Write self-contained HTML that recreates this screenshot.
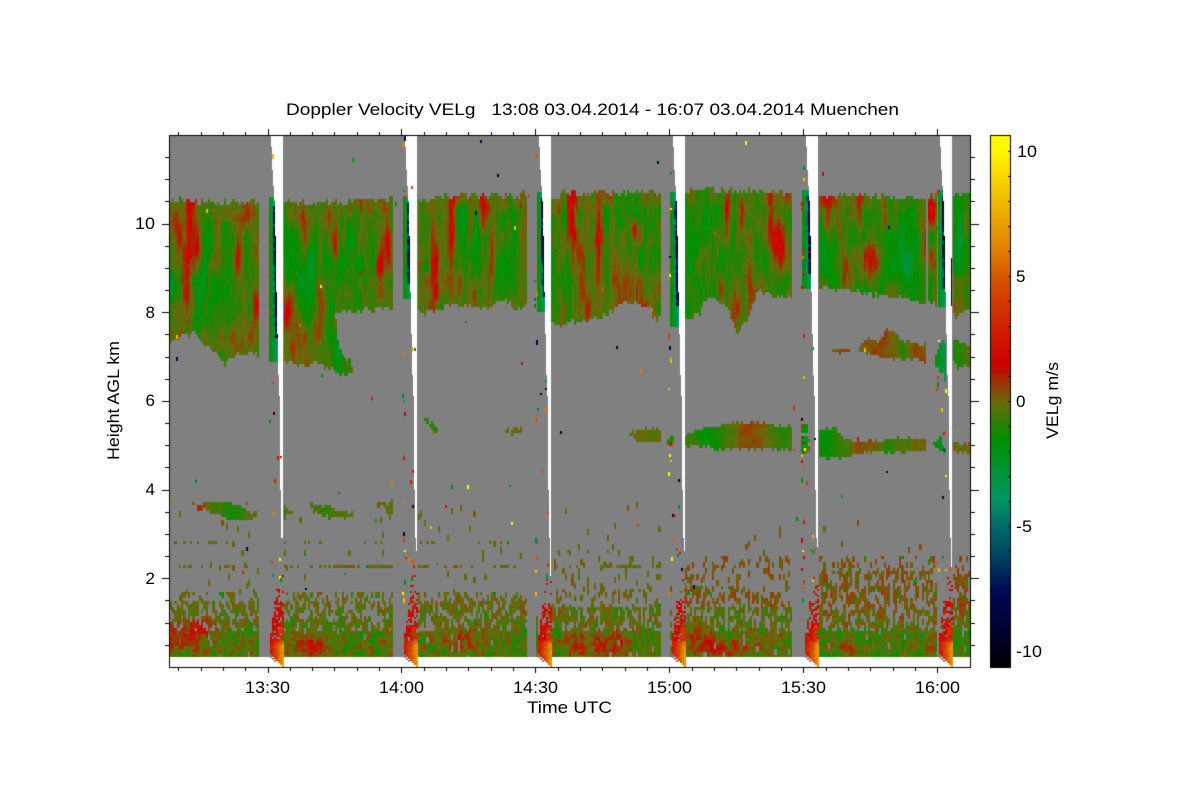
<!DOCTYPE html>
<html><head><meta charset="utf-8"><title>Doppler Velocity</title>
<style>
html,body{margin:0;padding:0;background:#fff;width:1200px;height:800px;overflow:hidden}
canvas,svg{position:absolute;left:0;top:0}
text{font-family:"Liberation Sans",sans-serif;font-size:17px;fill:#000}
</style></head><body>
<canvas id="c" width="1200" height="800"></canvas>
<svg width="1200" height="800" viewBox="0 0 1200 800">
<text x="286" y="115" textLength="613" lengthAdjust="spacingAndGlyphs" xml:space="preserve">Doppler Velocity VELg   13:08 03.04.2014 - 16:07 03.04.2014 Muenchen</text>
<g text-anchor="end">
<text x="155" y="229" textLength="20" lengthAdjust="spacingAndGlyphs">10</text>
<text x="155" y="318">8</text>
<text x="155" y="406">6</text>
<text x="155" y="495">4</text>
<text x="155" y="584">2</text>
</g>
<g text-anchor="middle">
<text x="267.5" y="693" textLength="45" lengthAdjust="spacingAndGlyphs">13:30</text>
<text x="401.5" y="693" textLength="45" lengthAdjust="spacingAndGlyphs">14:00</text>
<text x="535.5" y="693" textLength="45" lengthAdjust="spacingAndGlyphs">14:30</text>
<text x="669.5" y="693" textLength="45" lengthAdjust="spacingAndGlyphs">15:00</text>
<text x="803.5" y="693" textLength="45" lengthAdjust="spacingAndGlyphs">15:30</text>
<text x="937.5" y="693" textLength="45" lengthAdjust="spacingAndGlyphs">16:00</text>
</g>
<text x="527" y="713" textLength="85" lengthAdjust="spacingAndGlyphs">Time UTC</text>
<text transform="translate(119 460) rotate(-90)" textLength="119" lengthAdjust="spacingAndGlyphs">Height AGL km</text>
<text transform="translate(1058 439) rotate(-90)" textLength="77" lengthAdjust="spacingAndGlyphs">VELg m/s</text>
<text x="1017" y="157" textLength="20" lengthAdjust="spacingAndGlyphs">10</text>
<text x="1016" y="282">5</text>
<text x="1016" y="407">0</text>
<text x="1016" y="532" textLength="16" lengthAdjust="spacingAndGlyphs">-5</text>
<text x="1016" y="657" textLength="26" lengthAdjust="spacingAndGlyphs">-10</text>
</svg>
<script>
var g=document.getElementById('c').getContext('2d');
function h(a,b){var t=Math.sin(a*127.1+b*311.7)*43758.5453;return t-Math.floor(t);}
function vn(x,y){var i=Math.floor(x),j=Math.floor(y),f=x-i,e=y-j;f=f*f*(3-2*f);e=e*e*(3-2*e);
 var a=h(i,j),b=h(i+1,j),c=h(i,j+1),d=h(i+1,j+1);return (a*(1-f)+b*f)*(1-e)+(c*(1-f)+d*f)*e;}
var P=[[-10.7,0,0,0],[-9,0,0,50],[-7.5,0,10,85],[-6,0,75,100],[-5,0,105,105],[-3.9,0,150,100],[-1.5,0,145,0],[0,105,105,10],[1.5,205,0,0],[3.5,210,45,0],[5,215,85,0],[6,225,125,0],[8,240,185,0],[10,255,245,0],[10.7,255,255,0]];
function col(v){if(v<=-10.7)return 'rgb(0,0,0)';if(v>=10.7)return 'rgb(255,255,0)';
 for(var k=0;k<P.length-1;k++){if(v<=P[k+1][0]){var t=(v-P[k][0])/(P[k+1][0]-P[k][0]);
 return 'rgb('+Math.round(P[k][1]+t*(P[k+1][1]-P[k][1]))+','+Math.round(P[k][2]+t*(P[k+1][2]-P[k][2]))+','+Math.round(P[k][3]+t*(P[k+1][3]-P[k][3]))+')';}}}
function ip(a,x){if(x<=a[0][0])return a[0][1];for(var k=0;k<a.length-1;k++){if(x<=a[k+1][0]){var t=(x-a[k][0])/(a[k+1][0]-a[k][0]||1);return a[k][1]+t*(a[k+1][1]-a[k][1]);}}return a[a.length-1][1];}
var CIR=[
{x:[170,259],t:[[170,201],[258,203]],b:[[170,342],[193,333],[203,342],[213,352],[225,363],[238,353],[258,355]]},
{x:[283,392],t:[[283,200],[320,205],[340,203],[392,198]],b:[[283,362],[300,365],[318,362],[325,368],[335,370],[335.5,312],[392,308]]},
{x:[335,352],t:[[335,310],[337,330],[340,350],[347,358],[352,366]],b:[[335,370],[345,375],[352,370]]},
{x:[417,526],t:[[417,202],[440,197],[526,195]],b:[[417,314],[436,310],[445,306],[470,304],[480,307],[490,306],[500,298],[505,300],[515,306],[526,306]]},
{x:[551,660],t:[[551,197],[565,194],[660,194]],b:[[551,318],[557,325],[575,322],[600,317],[612,310],[622,304],[635,302],[650,306],[653,320],[660,318]]},
{x:[685,792],t:[[685,196],[690,190],[780,193],[792,195]],b:[[685,315],[690,317],[700,315],[705,300],[712,298],[720,300],[726,305],[733,322],[736,333],[745,325],[750,310],[758,292],[780,295],[792,295]]},
{x:[818,927],t:[[818,195],[850,195],[880,197],[927,200]],b:[[818,290],[830,288],[860,290],[880,296],[900,296],[915,300],[925,305],[927,303]]},
{x:[929,938],t:[[929,197],[938,197]],b:[[929,300],[938,308]]},
{x:[952,970],t:[[952,197],[970,196]],b:[[952,312],[958,318],[970,306]]}
];
var B=[[190,215,3,20,3],[197,243,2,15,2.5],[216,240,3,20,2],[238,255,2,15,2.5],[188,270,4,25,2.5],[186,300,6,20,1.6],[256,305,3,15,4],[178,240,2,15,1.5],[215,290,20,35,-1.4],[170,290,6,30,-1],
[304,235,3,20,2.5],[320,250,2,15,2.2],[335,245,2,20,2.5],[360,240,2,12,2],[380,270,3,25,2.5],[388,230,2,20,2],[293,330,8,25,1.5],[318,330,5,20,1.5],[320,295,2,10,1.5],[310,265,15,25,-1.6],[350,260,15,30,-1.2],[340,350,10,12,-1.2],[290,330,6,40,.8],
[452,220,2.5,30,3.5],[483,220,3,20,3],[470,225,2,20,3],[434,250,3,30,2.5],[490,260,5,20,2.2],[505,280,10,25,-1.5],[477,240,8,15,-1.5],[432,290,4,20,1.5],[460,280,2,15,1.5],
[573,225,3,20,3],[600,225,2,15,2],[635,228,3,8,3.5],[599,245,2,20,2.5],[582,255,2,15,2.5],[600,290,3,25,1.5],[570,215,2,20,2],[590,290,25,25,.5],[640,280,20,30,.6],[555,280,10,30,-.5],
[728,210,2.5,20,3],[742,210,2,12,2.5],[770,220,3,25,2.5],[777,245,4,15,3],[750,275,2.5,25,2],[783,250,2,15,2],[770,270,10,20,-1],[700,300,15,25,-.8],[690,225,10,30,-.6],[735,320,8,15,.6],
[828,215,4,20,3],[838,220,2,12,2.5],[870,260,7,15,2.5],[840,240,2,12,2],[860,210,2,15,2],[900,250,12,30,-1.3],[823,240,3,25,-1.5],[885,215,2,12,1.5],[845,265,2,15,2],[915,280,10,18,-1],
[932,211,3,9,3.5],[930,260,3,8,1.5],[966,225,2,15,3],[960,240,6,30,-1.5]];
var MID=[
{x:[197,258],t:[[197,506],[208,502],[225,502],[240,504],[245,510],[258,512]],b:[[197,510],[205,510],[215,515],[225,517],[240,520],[258,520]],v:[[197,.8],[212,-.3],[228,-1.1],[245,-.6],[258,-.2]]},
{x:[283,293],t:[[283,507],[293,510]],b:[[283,518],[293,514]],v:[[283,-.5],[293,0]]},
{x:[309,353],t:[[309,505],[330,505],[337,510],[353,513]],b:[[309,507],[312,510],[320,515],[335,518],[353,518]],v:[[309,-.3],[330,-.9],[353,-.3]]},
{x:[380,392],t:[[380,503],[392,502]],b:[[380,507],[386,508],[387,514],[392,514]],v:[[380,-.2],[392,-.3]]},
{x:[420,423],t:[[420,512],[423,512]],b:[[420,518],[423,518]],v:[[420,-.4],[423,-.4]]},
{x:[425,437],t:[[425,416],[428,420],[437,428]],b:[[425,423],[430,430],[437,433]],v:[[425,-.7],[437,-.7]]},
{x:[505,523],t:[[505,428],[523,429]],b:[[505,433],[523,433]],v:[[505,-.1],[523,-.1]]},
{x:[630,660],t:[[630,433],[638,430],[660,428]],b:[[630,437],[640,441],[660,442]],v:[[630,-.2],[660,-.1]]},
{x:[668,675],t:[[668,438],[675,436]],b:[[668,443],[675,442]],v:[[668,-1.2],[675,-1.8]]},
{x:[684,792],t:[[684,435],[695,430],[710,427],[735,423],[765,422],[775,427],[790,425],[792,425]],b:[[684,445],[710,447],[714,449],[785,449],[792,452]],v:[[684,-.6],[708,-1.7],[725,-.6],[745,.45],[762,.2],[780,-1],[792,-.7]]},
{x:[800,808],t:[[800,425],[808,425]],b:[[800,433],[808,433]],v:[[800,-1.5],[808,-1.5]]},
{x:[800,811],t:[[800,436],[806,434],[811,442]],b:[[800,455],[806,454],[811,448]],v:[[800,-1.5],[808,-3],[811,-3.2]]},
{x:[818,925],t:[[818,428],[835,428],[840,435],[855,441],[875,441],[900,437],[925,440]],b:[[818,458],[840,458],[855,454],[880,451],[900,452],[925,452]],v:[[818,-1.3],[832,-1.4],[850,-.4],[860,.4],[875,.1],[888,-1.1],[905,-.2],[925,.2]]},
{x:[933,946],t:[[933,440],[940,438],[946,450]],b:[[933,444],[940,452],[946,455]],v:[[933,-1],[946,-3.2]]},
{x:[952,970],t:[[952,443],[970,443]],b:[[952,452],[970,454]],v:[[952,.1],[970,.2]]},
{x:[833,850],t:[[833,350],[845,349],[850,348]],b:[[833,352],[850,352]],v:[[833,.4],[850,.4]]},
{x:[858,927],t:[[858,348],[865,340],[880,340],[885,330],[895,330],[900,340],[920,345],[927,345]],b:[[858,350],[870,355],[890,358],[920,360],[927,367]],v:[[858,.3],[875,.4],[890,.5],[903,-.7],[915,.4],[927,.2]]},
{x:[935,946],t:[[935,355],[943,340],[946,345]],b:[[935,365],[943,375],[946,385]],v:[[935,-1],[943,-3.4],[946,-3.6]]},
{x:[952,970],t:[[952,342],[958,340],[970,345]],b:[[952,360],[958,368],[970,366]],v:[[952,-.9],[960,-.9],[970,-.3]]}
];
var LOWB=[[200,628,10,8,1.6],[185,642,8,6,1.1],[172,632,6,10,1.1],[306,645,10,8,1.1],[312,650,6,5,.8],[323,648,6,6,1.1],[460,640,15,10,.8],[600,647,10,8,1.7],[575,645,8,8,1.3],[620,640,6,12,1.1],[700,640,15,8,1.1],[745,645,12,6,1.1],[715,650,12,6,1],[850,650,8,6,1.1],[930,640,8,8,.8]];
var WR=[283,417,551,685,818,952],TIP=[553,566,591,566,562,582];
var STR=[269,403,537,670,802,938],YS=[197,197,192,192,190,190],YE=[362,298,312,325,287,305];
var GAP=[[259,269],[392,402],[526,536],[660,669],[793,803]];
function wlOff(y){return ip([[135,-12],[170,-10.5],[208,-8],[292,-6.5],[395,-4],[396,-3],[489,-3],[490,-2],[537,-2],[538,-1],[600,-1]],y);}
function blDensity(x,y){
 var z=x<540?0:x<670?1:x<800?2:3,d=0;
 if(z==0){d=y>=632?.97:y>=620?.78:y>=612?.5:y>=600?.66:y>=592?.33:y>=500?.02:0;}
 else if(z==1){d=y>=630?.97:y>=608?.68:y>=590?.25:y>=550?.12:y>=500?.015:0;}
 else if(z==2){d=y>=630?.97:y>=608?.7:y>=585?.42:y>=555?.2:y>=500?.015:0;}
 else {d=y>=632?.98:y>=610?.68:y>=570?.55:y>=555?.25:y>=500?.015:0;}
 if(Math.abs(y-470.5)<2&&x<800)d=Math.max(d,.16);
 if(Math.abs(y-541.5)<2&&x<540)d=Math.max(d,.22);
 if(Math.abs(y-566.5)<2)d=Math.max(d,(x>320&&x<392)||(x>610&&x<640)?.7:.28);
 return d;
}
function blVal(x,y,i,j){
 var z=x<540?0:x<670?1:x<800?2:3,r=h(i*3,j+9),v;
 var n=vn(x/3,y/6)-.5;
 if(y>=630){v=(z==3?-.65:-.42)+n*2+(r-.5)*.9;}
 else if(y>=608){v=(z==3?-.2:-.25)+n*1.4+(r-.5)*.6;if(z==3&&y<620)v=.1+n*1.2;}
 else{v=(z>=2?.35:.02)+n*.7;if(r<.06)v=-1.3;}
 for(var k=0;k<LOWB.length;k++){var b=LOWB[k],dx=(x-b[0])/b[2],dy=(y-b[1])/b[3],q=dx*dx+dy*dy;if(q<9)v+=b[4]*Math.exp(-q/2);}
 return v;
}
g.fillStyle='#fff';g.fillRect(0,0,1200,800);
g.fillStyle='#808080';g.fillRect(170,136,800,521);
var cw=2.23,rh=3;
for(var i=0;i<359;i++){
 var x0=170+cw*i,xc=x0+1.1,px=Math.round(x0),pw=Math.min(Math.round(x0+cw),970)-px;
 if(pw<=0)continue;
 for(var j=0;j<174;j++){
  var y=136+rh*j,yc=y+1.5,v=null,k,L;
  for(k=0;k<CIR.length;k++){L=CIR[k];
   if(xc>=L.x[0]&&xc<L.x[1]){
    var t=ip(L.t,xc)+(h(i,3)-.6)*7,b=ip(L.b,xc)+(h(i,5)-.45)*6;
    if(yc>t&&yc<b){
     var s1=vn(xc/16+k*7,yc/60+k),s2=vn(xc/6+k*3,yc/24+k*2),s3=vn(xc/2.3+k,yc/14);
     var fr=(yc-t)/(b-t);
     v=-.72+1.3*(s1-.5)+1.4*(s2-.5)+1.3*(s3-.5)+.25*(h(i,j)-.5);
     if(fr<.12)v+=.4;
     if(fr>.6)v+=(fr-.6)*.5;
     for(var q=0;q<B.length;q++){var bb=B[q],dx=(xc-bb[0])/bb[2],dy=(yc-bb[1])/bb[3],dd=dx*dx+dy*dy;if(dd<9)v+=bb[4]*.72*Math.exp(-dd/2);}
    }
   }
  }
  if(v===null){for(k=0;k<MID.length;k++){L=MID[k];
   if(xc>=L.x[0]&&xc<L.x[1]){
    var t2=ip(L.t,xc)+(h(i,13)-.5)*3.5,b2=ip(L.b,xc)+(h(i,15)-.5)*3.5;
    if(yc>t2&&yc<b2){v=ip(L.v,xc)+.8*(vn(xc/5,yc/9)-.5);}
   }}}
  if(v===null&&y>=500&&y<657){
   var skip=false;
   for(k=0;k<GAP.length;k++)if(xc>=GAP[k][0]&&xc<GAP[k][1])skip=true;
   for(k=0;k<WR.length;k++)if(xc>=WR[k]-14&&xc<WR[k])skip=true;
   if(!skip){var d=blDensity(xc,yc);
    if(d>0&&h(i,Math.floor((j+(i%3))/2)+40)<d)v=blVal(xc,yc,i,j);}
  }
  if(v!==null){g.fillStyle=col(v);g.fillRect(px,y,pw,Math.min(rh,657-y));}
 }
}
/* strips: olive-green fading to teal then navy beside the gap */
for(var n=0;n<6;n++){
 for(var yy=YS[n];yy<YE[n];yy+=3){
  var wl=WR[n]+wlOff(yy)+(h(n,yy)>.7?1:0),xs=STR[n];
  for(var xx=xs;xx<wl;xx+=2){
   var tt=(xx-xs+2)/Math.max(wl-xs,3),lp=(yy-YS[n])/(YE[n]-YS[n]);
   var vv=-.9-9*Math.pow(tt,3)-(h(xx,yy)-.5)*.8;
   if(lp>.85)vv=-1.2-2.4*tt;
   if(lp<.05)vv=-2-1.8*tt;
   g.fillStyle=col(vv);g.fillRect(xx,yy,2,3);
  }
 }
}
g.fillStyle=col(-3.6);g.fillRect(549,215,1,110);
/* bursts at ground */
for(n=0;n<6;n++){
 var w=WR[n];
 for(yy=575;yy<667;yy+=2){
  var xl=ip([[575,w-6],[600,w-9],[625,w-12],[640,w-14],[652,w-14],[667,w-1]],yy);
  var dn=yy<600?.15:yy<625?.62:yy<640?.92:1;
  for(xx=w-15;xx<w;xx+=2){
   if(xx<xl)continue;
   if(h(xx,yy+n)>dn)continue;
   var tx=(xx-(w-14))/14,vb;
   if(yy<640){vb=1.4+h(xx+1,yy)*1.2;if(yy>625&&tx>.6)vb+=1.5;if(h(xx,yy+3)<.07)vb=-.5;}
   else{vb=1.7+5*tx*Math.min(1,(yy-634)/10)+h(xx+2,yy)*1;}
   g.fillStyle=col(vb);g.fillRect(xx,yy,2,2);
  }
 }
 g.fillStyle='#808080';
 for(yy=652;yy<662;yy+=2){var xe=ip([[652,w-14],[667,w-1]],yy);g.fillRect(Math.round(xe)-2,yy,2,2);}
}
/* white scan gaps */
g.fillStyle='#fff';
for(n=0;n<6;n++){
 for(yy=135;yy<TIP[n];yy++){
  var wo=wlOff(yy),right=WR[n];
  if(yy>TIP[n]-16){wo=-1.2;right=WR[n]-.8;}
  g.fillRect(Math.round(WR[n]+wo),yy,Math.round(right)-Math.round(WR[n]+wo),1);
 }
}
g.fillStyle='#000';g.fillRect(951,258,1,48);
/* speckle */
var seed=12345;function R(){seed=(seed*16807)%2147483647;return seed/2147483647;}
var DV=[-8,-4.5,-3,-1.5,2,4,6,8,10,5,3];
function dot(x,y,w,hh){g.fillStyle=col(DV[Math.floor(R()*DV.length)]);g.fillRect(x,y,w,hh);}
var CO=[[403,.17],[535,.14],[669,.14],[802,.34],[271,.08],[937,.08]];
for(n=0;n<CO.length;n++){for(yy=136;yy<600;yy+=6){if(R()<CO[n][1])dot(CO[n][0]+Math.floor(R()*3)-1,yy,2,2+Math.floor(R()*4));}}
for(n=0;n<70;n++){dot(170+Math.floor(R()*798),136+Math.floor(R()*460),2,2+Math.floor(R()*3));}
for(n=0;n<6;n++){for(var m=0;m<10;m++){dot(WR[n]-14+Math.floor(R()*12),380+Math.floor(R()*200),2,2+Math.floor(R()*3));}}
/* colour bar */
for(yy=136;yy<667;yy+=2){g.fillStyle=col((401-yy)/25);g.fillRect(991,yy,19,2);}
/* axes */
g.fillStyle='#000';
g.fillRect(169,135,802,1);g.fillRect(169,667,802,1);g.fillRect(169,135,1,533);g.fillRect(970,135,1,533);
g.fillRect(990,135,21,1);g.fillRect(990,667,21,1);g.fillRect(990,135,1,533);g.fillRect(1010,135,1,533);
for(n=-4;n<31;n++){var tx2=267.5+22.33*n;if(tx2<172||tx2>968)continue;var mj=(n%6==0);var X=Math.round(tx2);
 g.fillRect(X,mj?129:132,1,mj?6:3);g.fillRect(X,668,1,mj?5:3);}
for(n=-3;n<20;n++){var ty=223.5+22.17*n;if(ty<138||ty>665)continue;var mj2=(n%4==0);var Y=Math.round(ty);
 g.fillRect(mj2?162:165,Y,mj2?7:4,1);g.fillRect(971,Y,mj2?8:4,1);}
for(yy=151;yy<=651;yy+=25){g.fillRect(1008,yy,2,1);}
</script>
</body></html>
